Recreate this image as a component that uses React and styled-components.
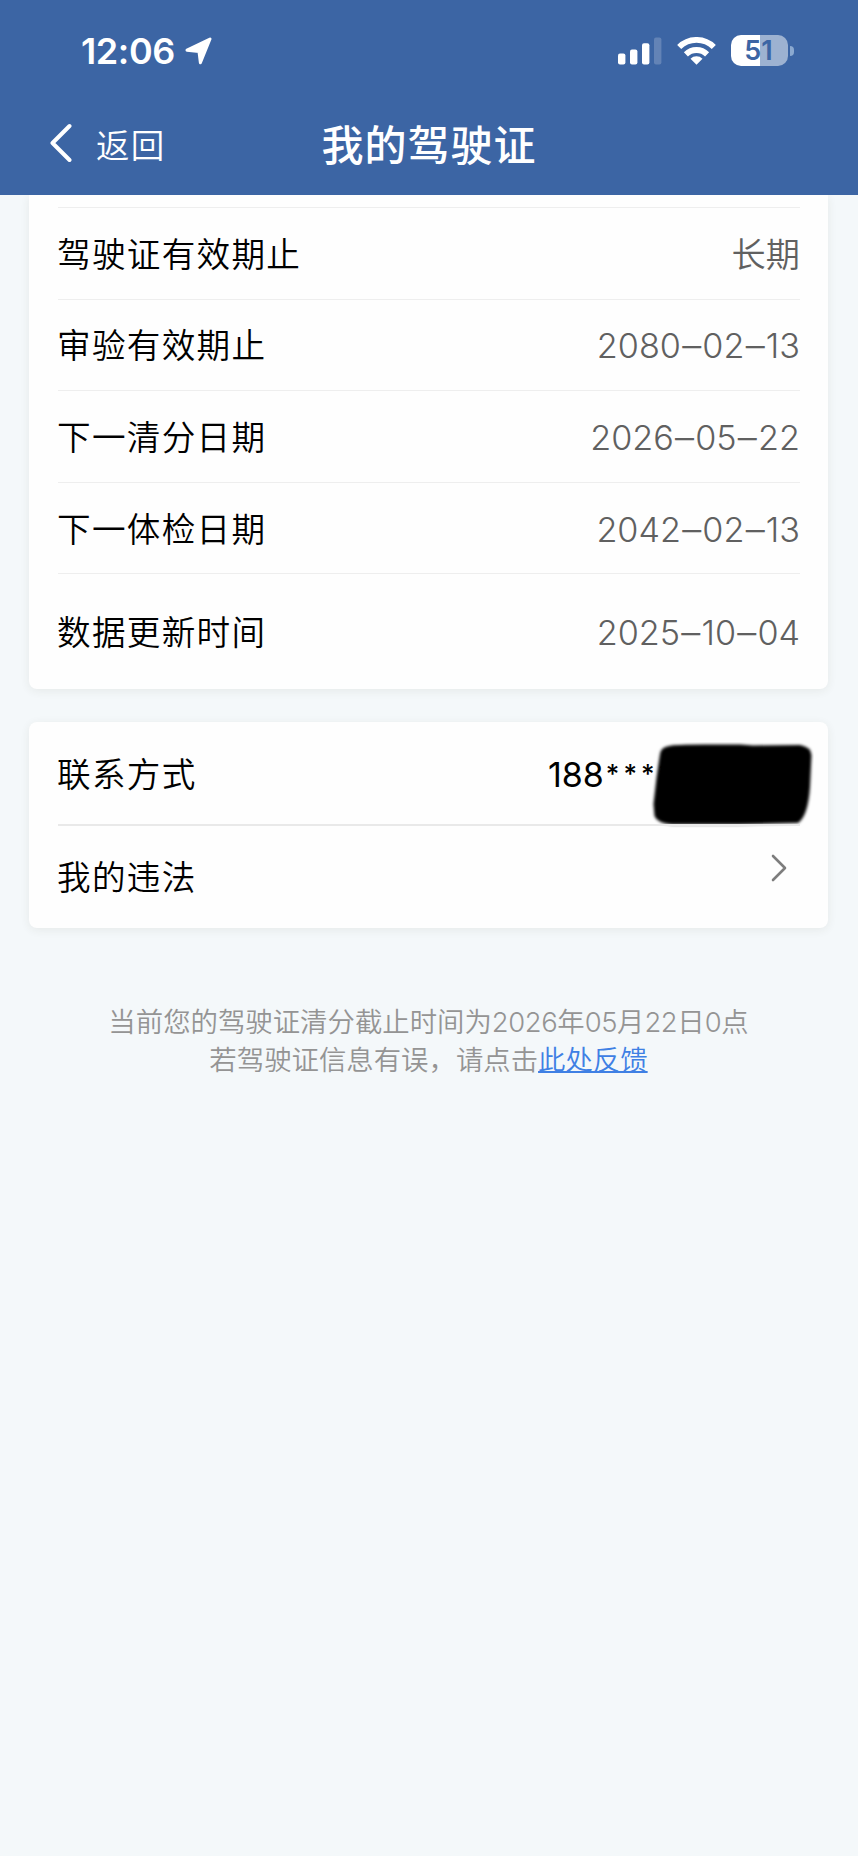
import React from "react";
import styled, { createGlobalStyle } from "styled-components";

const records = [
  { label: "驾驶证有效期止", value: ["长期"] },
  { label: "审验有效期止", value: ["2080", "02", "13"] },
  { label: "下一清分日期", value: ["2026", "05", "22"] },
  { label: "下一体检日期", value: ["2042", "02", "13"] },
  { label: "数据更新时间", value: ["2025", "10", "04"], height: 115.6 },
];

const App = () => {
  return (
    <Page>
      <GlobalStyle />
      <Header>
        <StatusBar>
          <Clock>12:06</Clock>
          <LocationIcon />
          <StatusIcons>
            <SignalIcon />
            <WifiIcon />
            <Battery>
              <BatteryBody>51</BatteryBody>
              <BatteryCap />
            </Battery>
          </StatusIcons>
        </StatusBar>
        <NavBar>
          <BackBtn>
            <svg width="22" height="40" viewBox="0 0 22 40" fill="none" stroke="#fff" strokeWidth="4" strokeLinecap="round" strokeLinejoin="round">
              <path d="M19.5 3L2.5 20L19.5 37" />
            </svg>
            <BackText>返回</BackText>
          </BackBtn>
          <Title>我的驾驶证</Title>
        </NavBar>
      </Header>

      <Content>
        <Card $flatTop>
          <CardTop />
          {records.map((item) => (
            <Row key={item.label} $height={item.height}>
              <Label>{item.label}</Label>
              <Value>
                {item.value.map((part, i) => (
                  <React.Fragment key={i}>
                    {i > 0 && <Dash>–</Dash>}
                    {part}
                  </React.Fragment>
                ))}
              </Value>
            </Row>
          ))}
        </Card>

        <Card>
          <Row $height={102} $first>
            <Label $low>联系方式</Label>
            <Phone>
              188<Stars>****</Stars>
            </Phone>
            <Mask />
          </Row>
          <Row $height={104} $strong>
            <Label>我的违法</Label>
            <Arrow width="16" height="28" viewBox="0 0 16 28" fill="none" stroke="#7d7d7d" strokeWidth="2.6" strokeLinecap="round" strokeLinejoin="round">
              <path d="M2 2L14 14L2 26" />
            </Arrow>
          </Row>
        </Card>

        <Notice>
          <p>
            当前您的驾驶证清分截止时间为<Num>2026</Num>年<Num>05</Num>月<Num>22</Num>日<Num>0</Num>点
          </p>
          <p>
            若驾驶证信息有误，请点击<a>此处反馈</a>
          </p>
        </Notice>
      </Content>
    </Page>
  );
};

const LocationIcon = () => (
  <svg width="28" height="28" viewBox="0 0 28 28">
    <path
      d="M2 13.2L25 2L15.4 25.8L14 14.6L2 13.2Z"
      fill="#fff"
      stroke="#fff"
      strokeWidth="3"
      strokeLinejoin="round"
    />
  </svg>
);

const SignalIcon = () => (
  <svg width="44" height="28" viewBox="0 0 44 28" fill="#fff">
    <rect x="0" y="16.5" width="7.4" height="11" rx="2" />
    <rect x="12" y="12.5" width="7.4" height="15" rx="2" />
    <rect x="24" y="6.2" width="7.4" height="21.3" rx="2" />
    <rect x="36" y="0.5" width="7.4" height="27" rx="2" opacity="0.2" />
  </svg>
);

const WifiIcon = () => (
  <svg width="39" height="28" viewBox="0 0 39 28">
    <g fill="none" stroke="#fff" strokeWidth="5.8">
      <path d="M2.2 10A24.6 24.6 0 0 1 36.8 10" />
      <path d="M8.9 17.3A15.2 15.2 0 0 1 30.1 17.3" />
    </g>
    <path d="M13.5 21.8A8.6 8.6 0 0 1 25.5 21.8L19.5 27.8Z" fill="#fff" />
  </svg>
);

const Mask = () => (
  <MaskSvg width="164" height="86" viewBox="0 0 164 86">
    <defs>
      <filter id="soft" x="-5%" y="-10%" width="110%" height="120%">
        <feGaussianBlur stdDeviation="1.8" />
      </filter>
    </defs>
    <path
      d="M19 4Q24 2.5 55 2.5L90 2.5L103 3.5L150 3Q161 5 161.5 13L160 45Q158 74 148 81L88 82.5L22 82.5Q7 81 4.5 74L3.5 62L6.5 36L10 12Q11 5 19 4Z"
      fill="#000"
      filter="url(#soft)"
    />
  </MaskSvg>
);

const GlobalStyle = createGlobalStyle`
  body {
    margin: 0;
    background-color: #f4f8fa;
  }
`;

const Page = styled.div`
  width: 858px;
  min-height: 1856px;
  background-color: #f4f8fa;
  font-family: Inter, "Noto Sans CJK SC", sans-serif;
  color: #000;
`;

const Header = styled.div`
  height: 195px;
  background-color: #3c65a4;
  color: white;
`;

const StatusBar = styled.div`
  display: flex;
  align-items: center;
  height: 101px;
  padding: 0 64px 0 81px;
`;

const Clock = styled.span`
  margin-right: 10px;
  font-size: 36px;
  font-weight: 600;
  letter-spacing: -0.4px;
`;

const StatusIcons = styled.div`
  display: flex;
  align-items: center;
  gap: 15px;
  margin-left: auto;
`;

const Battery = styled.div`
  display: flex;
  align-items: center;
  gap: 2px;
`;

const BatteryBody = styled.div`
  width: 57px;
  height: 31px;
  border-radius: 10px;
  background: linear-gradient(to right, #fff 51%, #9db2d1 51%);
  color: #3c65a4;
  font-size: 27px;
  font-weight: 600;
  line-height: 32px;
  text-align: center;
  text-indent: -2px;
`;

const BatteryCap = styled.div`
  width: 4px;
  height: 10px;
  border-radius: 0 5px 5px 0;
  background-color: #8ba9d0;
`;

const NavBar = styled.div`
  display: grid;
  grid-template-columns: 1fr auto 1fr;
  align-items: center;
  height: 84px;
`;

const BackBtn = styled.div`
  display: flex;
  align-items: center;
  padding-left: 50px;
`;

const BackText = styled.span`
  margin: 5px 0 0 24px;
  font-size: 33.5px;
  font-weight: 350;
  line-height: 40px;
  letter-spacing: 1.2px;
`;

const Title = styled.div`
  padding-top: 5px;
  font-size: 42px;
  font-weight: 500;
  line-height: 50px;
  letter-spacing: 1px;
`;

const Content = styled.div`
  padding: 0 30px 0 29px;
`;

const Card = styled.div`
  margin-bottom: 33px;
  padding: 0 28px 0 29px;
  border-radius: ${(props) => (props.$flatTop ? "0 0 8px 8px" : "8px")};
  background-color: #fefefe;
  box-shadow: 0 2px 10px rgba(60, 60, 40, 0.08);
  clip-path: ${(props) => (props.$flatTop ? "inset(0 -20px -20px -20px)" : "none")};
`;

const CardTop = styled.div`
  height: 12px;
`;

const Row = styled.div`
  position: relative;
  display: flex;
  align-items: center;
  justify-content: space-between;
  box-sizing: border-box;
  height: ${(props) => props.$height || 91.6}px;
  border-top: ${(props) => (props.$first ? "none" : props.$strong ? "2px solid #e9e9e9" : "1px solid #eeeeee")};
`;

const Label = styled.span`
  margin-left: -1px;
  padding-top: ${(props) => (props.$low ? 5 : 3)}px;
  font-size: 33.6px;
  font-weight: 350;
  line-height: 48px;
  letter-spacing: 1.3px;
`;

const Value = styled.span`
  padding-top: 3px;
  color: #606060;
  font-size: 34.2px;
  font-weight: 350;
  line-height: 48px;
`;

const Dash = styled.span`
  margin: 0 1.2px;
  font-size: 38px;
  line-height: 0;
  vertical-align: -1px;
`;

const Phone = styled.span`
  margin-right: 124px;
  padding-top: 4px;
  font-size: 34px;
  font-weight: 400;
  line-height: 48px;
`;

const Stars = styled.span`
  margin-left: 2px;
  font-size: 26px;
  font-weight: 500;
  line-height: 0;
  letter-spacing: 4px;
  vertical-align: 4px;
`;

const MaskSvg = styled.svg`
  position: absolute;
  top: 20px;
  right: -14px;
`;

const Arrow = styled.svg`
  margin: 0 13px 17px 0;
`;

const Notice = styled.div`
  margin-top: 75px;
  color: #949494;
  font-size: 27.4px;
  font-weight: 350;
  line-height: 38px;
  text-align: center;

  p {
    margin: 0;
  }

  a {
    color: #3f80e4;
    text-decoration: underline;
    text-decoration-thickness: 2px;
  }
`;

const Num = styled.span`
  letter-spacing: -0.4px;
`;

export default App;
